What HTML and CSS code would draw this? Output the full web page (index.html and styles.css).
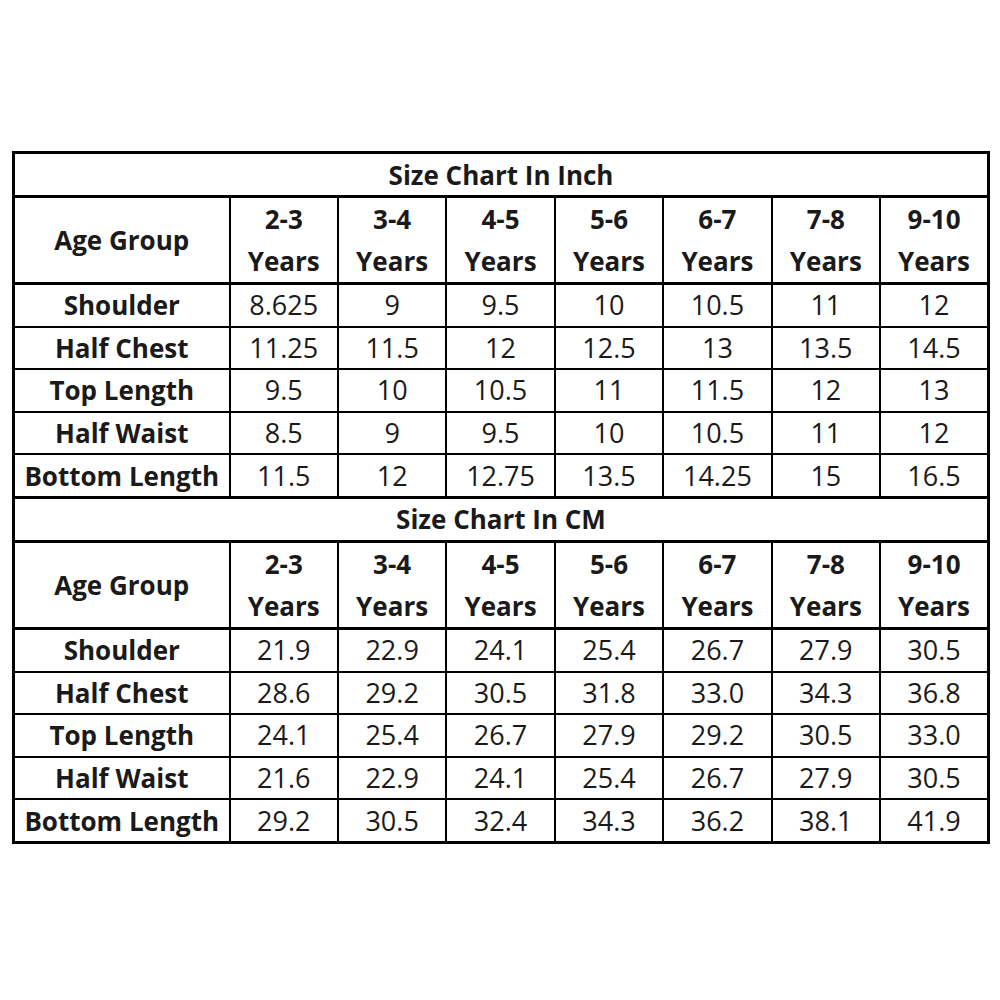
FILE: index.html
```html
<!DOCTYPE html>
<html>
<head>
<meta charset="utf-8">
<link rel="stylesheet" href="styles.css">
</head>
<body>
<div class="page">
<table class="chart">
  <colgroup>
    <col class="c-label"><col><col><col><col><col><col><col>
  </colgroup>
  <tbody>
    <tr class="title"><th colspan="8">Size Chart In Inch</th></tr>
    <tr class="head">
      <th class="label">Age Group</th>
      <th>2-3<br>Years</th><th>3-4<br>Years</th><th>4-5<br>Years</th><th>5-6<br>Years</th><th>6-7<br>Years</th><th>7-8<br>Years</th><th>9-10<br>Years</th>
    </tr>
    <tr class="row"><th class="label">Shoulder</th><td>8.625</td><td>9</td><td>9.5</td><td>10</td><td>10.5</td><td>11</td><td>12</td></tr>
    <tr class="row"><th class="label">Half Chest</th><td>11.25</td><td>11.5</td><td>12</td><td>12.5</td><td>13</td><td>13.5</td><td>14.5</td></tr>
    <tr class="row"><th class="label">Top Length</th><td>9.5</td><td>10</td><td>10.5</td><td>11</td><td>11.5</td><td>12</td><td>13</td></tr>
    <tr class="row"><th class="label">Half Waist</th><td>8.5</td><td>9</td><td>9.5</td><td>10</td><td>10.5</td><td>11</td><td>12</td></tr>
    <tr class="row last"><th class="label">Bottom Length</th><td>11.5</td><td>12</td><td>12.75</td><td>13.5</td><td>14.25</td><td>15</td><td>16.5</td></tr>
    <tr class="title"><th colspan="8">Size Chart In CM</th></tr>
    <tr class="head">
      <th class="label">Age Group</th>
      <th>2-3<br>Years</th><th>3-4<br>Years</th><th>4-5<br>Years</th><th>5-6<br>Years</th><th>6-7<br>Years</th><th>7-8<br>Years</th><th>9-10<br>Years</th>
    </tr>
    <tr class="row"><th class="label">Shoulder</th><td>21.9</td><td>22.9</td><td>24.1</td><td>25.4</td><td>26.7</td><td>27.9</td><td>30.5</td></tr>
    <tr class="row"><th class="label">Half Chest</th><td>28.6</td><td>29.2</td><td>30.5</td><td>31.8</td><td>33.0</td><td>34.3</td><td>36.8</td></tr>
    <tr class="row"><th class="label">Top Length</th><td>24.1</td><td>25.4</td><td>26.7</td><td>27.9</td><td>29.2</td><td>30.5</td><td>33.0</td></tr>
    <tr class="row"><th class="label">Half Waist</th><td>21.6</td><td>22.9</td><td>24.1</td><td>25.4</td><td>26.7</td><td>27.9</td><td>30.5</td></tr>
    <tr class="row"><th class="label">Bottom Length</th><td>29.2</td><td>30.5</td><td>32.4</td><td>34.3</td><td>36.2</td><td>38.1</td><td>41.9</td></tr>
  </tbody>
</table>
</div>
</body>
</html>
```

FILE: styles.css
```css
html, body {
  margin: 0;
  padding: 0;
  background: #ffffff;
}
.page {
  padding: 151px 0 0 12px;
}
.chart {
  border-collapse: collapse;
  table-layout: fixed;
  width: 978px;
  border: 3px solid #000;
  font-family: "Open Sans", "Liberation Sans", sans-serif;
  color: #1a1a1a;
}
.c-label {
  width: 216px;
}
.chart th, .chart td {
  border: 2px solid #000;
  padding: 0;
  text-align: center;
  vertical-align: middle;
  font-size: 26px;
  line-height: 40px;
  overflow: hidden;
}
.chart th {
  font-weight: 700;
}
.chart td {
  font-weight: 400;
  font-size: 27px;
}
.title th {
  height: 41px;
  border-bottom-width: 3px;
}
.head th {
  height: 83px;
  line-height: 42px;
  border-bottom-width: 3px;
}
.row th, .row td {
  height: 40.6px;
}
.row.last th, .row.last td {
  border-bottom-width: 3px;
}
.chart th.label {
  white-space: nowrap;
}
```
